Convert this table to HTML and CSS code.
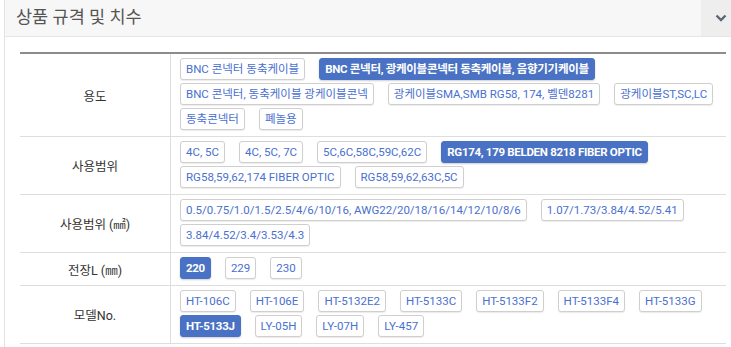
FILE: index.html
```html
<!DOCTYPE html>
<html lang="ko">
<head>
    <meta charset="UTF-8">
    <meta name="viewport" content="width=device-width, initial-scale=1.0">
    <title>상품 규격 및 치수</title>
    <link rel="stylesheet" href="styles.css">
</head>
<body>
    <div class="panel">
        <div class="panel-head">
            <h3>상품 규격 및 치수</h3>
            <button class="toggle-btn" type="button">
                <svg width="12" height="12" viewBox="0 0 12 12" fill="none" stroke="currentColor" stroke-width="2.4">
                    <polyline points="1.5 3.5 6 8 10.5 3.5"></polyline>
                </svg>
            </button>
        </div>

        <div class="panel-body">
            <table class="spec-table">
                <tbody>
                    <tr>
                        <th>용도</th>
                        <td>
                            <div class="opts">
                                <a class="opt">BNC 콘넥터 동축케이블</a>
                                <a class="opt active">BNC 콘넥터, 광케이블콘넥터 동축케이블, 음향기기케이블</a>
                                <a class="opt">BNC 콘넥터, 동축케이블 광케이블콘넥</a>
                                <a class="opt">광케이블SMA,SMB RG58, 174, 벨덴8281</a>
                                <a class="opt">광케이블ST,SC,LC</a>
                                <a class="opt">동축콘넥터</a>
                                <a class="opt">폐놀용</a>
                            </div>
                        </td>
                    </tr>
                    <tr>
                        <th>사용범위</th>
                        <td>
                            <div class="opts">
                                <a class="opt">4C, 5C</a>
                                <a class="opt">4C, 5C, 7C</a>
                                <a class="opt">5C,6C,58C,59C,62C</a>
                                <a class="opt active">RG174, 179 BELDEN 8218 FIBER OPTIC</a>
                                <a class="opt">RG58,59,62,174 FIBER OPTIC</a>
                                <a class="opt">RG58,59,62,63C,5C</a>
                            </div>
                        </td>
                    </tr>
                    <tr>
                        <th>사용범위 (㎟)</th>
                        <td>
                            <div class="opts">
                                <a class="opt">0.5/0.75/1.0/1.5/2.5/4/6/10/16, AWG22/20/18/16/14/12/10/8/6</a>
                                <a class="opt">1.07/1.73/3.84/4.52/5.41</a>
                                <a class="opt">3.84/4.52/3.4/3.53/4.3</a>
                            </div>
                        </td>
                    </tr>
                    <tr>
                        <th>전장L (㎜)</th>
                        <td>
                            <div class="opts">
                                <a class="opt active">220</a>
                                <a class="opt">229</a>
                                <a class="opt">230</a>
                            </div>
                        </td>
                    </tr>
                    <tr>
                        <th>모델No.</th>
                        <td>
                            <div class="opts">
                                <a class="opt">HT-106C</a>
                                <a class="opt">HT-106E</a>
                                <a class="opt">HT-5132E2</a>
                                <a class="opt">HT-5133C</a>
                                <a class="opt">HT-5133F2</a>
                                <a class="opt">HT-5133F4</a>
                                <a class="opt">HT-5133G</a>
                                <a class="opt active">HT-5133J</a>
                                <a class="opt">LY-05H</a>
                                <a class="opt">LY-07H</a>
                                <a class="opt">LY-457</a>
                            </div>
                        </td>
                    </tr>
                </tbody>
            </table>
        </div>
    </div>
</body>
</html>
```

FILE: styles.css
```css
body {
    margin: 0;
    padding: 0;
    overflow: hidden;
    font-family: Roboto, "Noto Sans CJK KR", sans-serif;
    color: #333;
    background: #fff;
}

.panel {
    width: 736px;
    margin-left: 4px;
    border-left: 1px solid #e3e3e3;
    border-right: 1px solid #e3e3e3;
}

.panel-head {
    display: flex;
    justify-content: space-between;
    align-items: stretch;
    height: 36px;
    background-color: #f7f7f7;
    border-bottom: 1px solid #e6e6e6;
}

.panel-head h3 {
    margin: 0;
    padding-left: 11px;
    font-size: 17.5px;
    font-weight: normal;
    line-height: 35px;
    color: #555;
}

.toggle-btn {
    width: 40px;
    border: none;
    background-color: #eeeeee;
    color: #5b6773;
    display: flex;
    justify-content: center;
    align-items: center;
    padding: 0;
}

.panel-body {
    padding: 15px 15px 10px;
}

.spec-table {
    width: 706px;
    border-collapse: collapse;
    border-top: 2px solid #8c8c8c;
}

.spec-table th,
.spec-table td {
    border-bottom: 1px solid #dedede;
}

.spec-table th {
    width: 150px;
    font-size: 12.5px;
    font-weight: normal;
    text-align: center;
    color: #333;
    border-right: 1px solid #dedede;
    padding: 0;
}

.spec-table td {
    padding: 4px 3px 6px 9px;
}

.opts {
    display: flex;
    flex-wrap: wrap;
    gap: 3px 14px;
}

.opt {
    display: inline-block;
    height: 20px;
    line-height: 20px;
    padding: 0 5px;
    border: 1px solid #cfcfcf;
    border-radius: 3px;
    background-color: #fff;
    color: #4a70d0;
    font-size: 11.5px;
    white-space: nowrap;
    box-shadow: 0 1px 1px rgba(0, 0, 0, 0.08);
    cursor: pointer;
}

.opt.active {
    background-color: #4a72c4;
    border-color: #4a72c4;
    color: #fff;
    font-weight: bold;
    letter-spacing: -0.3px;
    box-shadow: 0 1px 2px rgba(0, 0, 0, 0.2);
}
```
